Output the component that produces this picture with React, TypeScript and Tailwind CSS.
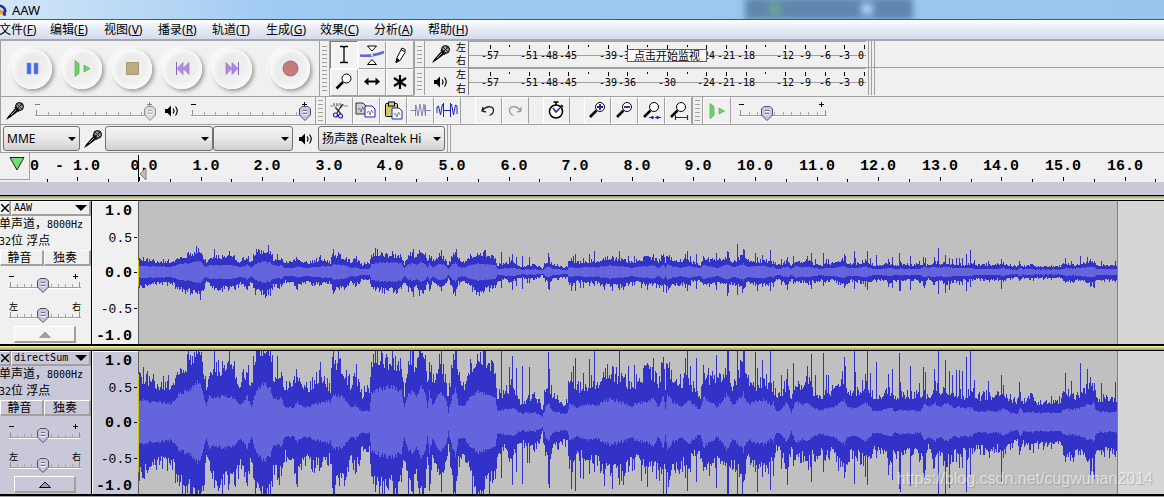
import React from 'react';

const SANS = "font-['Noto_Sans','Noto_Sans_CJK_SC',sans-serif]";
const MONO = "font-['Liberation_Mono','Noto_Sans_CJK_SC',monospace]";
const SMALL_MONO = "font-['DejaVu_Sans_Mono','Noto_Sans_CJK_SC',monospace]";

/* ---------- Waveform data ---------- */

// [x, rms, peak above, peak below]
const ENVELOPE: number[][] = [
  [0, 22, 48, 54], [11, 20, 39, 46], [21, 19, 38, 40], [31, 19, 38, 42], [34, 19, 36, 42], [36, 24, 50, 53],
  [41, 28, 57, 62], [51, 32, 60, 68], [56, 39, 76, 76], [61, 39, 80, 82], [64, 27, 57, 70], [67, 17, 38, 36],
  [71, 27, 54, 50], [76, 24, 53, 60], [89, 25, 56, 58], [95, 23, 50, 56], [101, 17, 38, 44], [108, 25, 55, 62],
  [112, 14, 32, 36], [115, 25, 68, 68], [120, 34, 76, 74], [126, 39, 80, 78], [131, 32, 78, 72], [134, 22, 47, 50],
  [141, 24, 52, 52], [146, 15, 34, 33], [154, 15, 42, 44], [158, 19, 50, 54], [166, 15, 33, 36], [174, 17, 39, 42],
  [184, 20, 46, 42], [191, 20, 34, 36], [194, 27, 64, 66], [204, 25, 54, 58], [211, 14, 36, 35], [216, 17, 48, 48],
  [223, 10, 27, 26], [228, 12, 38, 36], [230, 9, 24, 20], [232, 28, 64, 64], [240, 33, 68, 66], [248, 35, 62, 64],
  [262, 32, 60, 62], [265, 14, 30, 36], [268, 27, 57, 56], [273, 30, 70, 74], [277, 24, 50, 48], [281, 37, 80, 78],
  [286, 30, 72, 66], [288, 15, 37, 38], [290, 30, 62, 58], [293, 17, 40, 37], [301, 30, 64, 62], [306, 24, 44, 44],
  [309, 10, 22, 26], [313, 27, 60, 62], [316, 33, 76, 74], [319, 17, 50, 40], [324, 15, 35, 37], [329, 22, 50, 46],
  [333, 27, 58, 60], [339, 30, 72, 74], [351, 25, 60, 58], [356, 24, 54, 56], [358, 11, 27, 38], [364, 12, 27, 24],
  [371, 14, 36, 34], [376, 12, 30, 30], [380, 9, 20, 20], [391, 9, 23, 25], [396, 9, 26, 24], [401, 7, 18, 17],
  [403, 5, 12, 11], [406, 14, 36, 32], [409, 20, 40, 40], [413, 10, 27, 26], [424, 8, 19, 20], [428, 9, 20, 21],
  [430, 19, 46, 46], [438, 14, 34, 35], [446, 17, 35, 32], [451, 17, 40, 40], [458, 17, 36, 38], [463, 19, 52, 46],
  [471, 23, 49, 50], [484, 19, 43, 50], [491, 15, 34, 42], [498, 19, 40, 36], [508, 20, 52, 50], [514, 24, 49, 42],
  [519, 15, 40, 50], [524, 25, 58, 58], [526, 14, 37, 40], [528, 27, 56, 60], [533, 20, 47, 50], [543, 15, 40, 40],
  [549, 22, 43, 46], [554, 17, 34, 30], [561, 12, 27, 33], [564, 25, 53, 54], [571, 19, 43, 43], [578, 15, 40, 40],
  [588, 28, 58, 50], [593, 17, 37, 43], [599, 22, 46, 50], [604, 28, 60, 56], [609, 17, 40, 36], [618, 22, 37, 46],
  [626, 22, 43, 49], [631, 17, 34, 40], [634, 20, 34, 46], [637, 10, 29, 26], [639, 11, 24, 26], [648, 19, 39, 46],
  [652, 10, 24, 29], [656, 20, 43, 40], [664, 17, 34, 33], [668, 20, 49, 43], [673, 15, 32, 33], [681, 11, 27, 30],
  [688, 14, 29, 33], [694, 14, 33, 28], [698, 17, 40, 40], [705, 22, 46, 50], [709, 14, 31, 33], [716, 13, 27, 30],
  [726, 19, 39, 40], [731, 14, 27, 33], [734, 11, 27, 26], [746, 12, 27, 33], [751, 14, 29, 36], [756, 11, 24, 30],
  [761, 12, 29, 36], [769, 12, 27, 30], [781, 10, 27, 31], [785, 19, 30, 46], [789, 15, 24, 26], [795, 19, 37, 43],
  [799, 15, 30, 33], [806, 19, 34, 40], [814, 15, 30, 33], [824, 14, 25, 30], [831, 14, 30, 31], [838, 10, 25, 26],
  [849, 11, 26, 30], [858, 10, 27, 26], [864, 14, 30, 33], [871, 9, 23, 23], [878, 8, 21, 20], [881, 14, 26, 30],
  [884, 9, 21, 20], [891, 10, 25, 27], [898, 9, 20, 23], [921, 9, 22, 23], [926, 14, 34, 36], [931, 12, 27, 36],
  [941, 14, 24, 30], [948, 17, 34, 40], [954, 18, 36, 43], [958, 10, 24, 30], [978, 10, 24, 30],
];

// [x, peak above, peak below], single columns that stick out of the envelope
const SPIKES: number[][] = [
  [75, 82, 66], [90, 74, 62], [138, 66, 50], [181, 60, 46], [194, 84, 80], [217, 58, 50], [236, 88, 70], [274, 84, 90],
  [302, 80, 70], [362, 72, 56], [370, 55, 40], [373, 66, 63], [377, 54, 50],
  [383, 56, 62], [388, 24, 41], [390, 55, 41], [409, 70, 62], [410, 53, 66], [432, 50, 67], [434, 56, 40],
  [436, 64, 69], [441, 40, 56], [444, 49, 57], [450, 63, 52], [455, 74, 50], [465, 40, 64], [473, 56, 67],
  [480, 74, 63], [484, 44, 63], [489, 56, 50], [495, 57, 48], [502, 40, 59], [508, 59, 65], [514, 64, 44],
  [524, 65, 60], [527, 59, 76], [530, 60, 58], [541, 48, 46], [546, 64, 56], [548, 76, 69], [551, 56, 50],
  [557, 64, 60], [577, 67, 66], [588, 74, 88], [589, 72, 76], [598, 102, 84], [603, 60, 76], [604, 84, 60],
  [605, 78, 58], [616, 70, 50], [618, 54, 70], [623, 62, 55], [631, 78, 68], [642, 47, 47], [648, 53, 63],
  [654, 59, 44], [672, 68, 60], [676, 47, 40], [684, 69, 50], [687, 47, 33], [689, 47, 33], [705, 65, 56],
  [706, 56, 50], [715, 74, 62], [716, 50, 34], [726, 48, 55], [728, 76, 63], [731, 49, 33], [737, 60, 36],
  [749, 48, 53], [753, 53, 58], [760, 69, 67], [761, 40, 70], [771, 56, 64], [780, 39, 40], [784, 55, 51],
  [786, 50, 48], [795, 53, 44], [799, 88, 80], [806, 62, 74], [810, 51, 66], [813, 47, 40], [817, 52, 40],
  [820, 52, 46], [823, 51, 46], [827, 65, 70], [831, 78, 53], [835, 42, 30], [849, 41, 30], [862, 47, 60],
  [864, 37, 36], [880, 40, 33], [891, 29, 28], [926, 49, 40], [932, 41, 33], [941, 59, 33], [948, 53, 40],
  [951, 45, 53], [955, 39, 57], [962, 39, 33], [976, 40, 30],
];

const CLIP_WIDTH = 979;
const MID = 71;

function noise(n: number) {
  const v = Math.sin(n * 127.1 + 11.7) * 43758.5453;
  return v - Math.floor(v);
}

function buildColumns() {
  const columns: number[][] = [];
  let k = 0;
  for (let x = 0; x < CLIP_WIDTH; x++) {
    while (k < ENVELOPE.length - 2 && ENVELOPE[k + 1][0] <= x) k++;
    const a = ENVELOPE[k];
    const b = ENVELOPE[k + 1];
    const t = Math.min(1, (x - a[0]) / (b[0] - a[0]));
    const mix = (i: number) => a[i] + (b[i] - a[i]) * t;
    const swing = (seed: number) => 0.84 + Math.pow(noise(seed), 2) * 0.4;
    columns.push([
      mix(1) * (0.92 + noise(x + 5000) * 0.18),
      mix(2) * swing(x),
      mix(3) * swing(x + 2000),
    ]);
  }
  SPIKES.forEach(([x, up, down]) => {
    columns[x][1] = Math.max(columns[x][1], up);
    columns[x][2] = Math.max(columns[x][2], down);
  });
  return columns;
}

const COLUMNS = buildColumns();

function wavePath(gain: number, up: number, down: number) {
  return COLUMNS.map((c, x) => {
    const top = MID - Math.max(2, Math.round(c[up] * gain));
    const bottom = MID + Math.max(2, Math.round(c[down] * gain));
    return `M${x} ${top}h1V${bottom}h-1z`;
  }).join('');
}

const Waveform = ({ gain }: { gain: number }) => (
  <svg width={CLIP_WIDTH} height="143" shapeRendering="crispEdges" className="block flex-none bg-[#c0c0c0]">
    <path d={wavePath(gain, 1, 2)} fill="#3232c8" />
    <path d={wavePath(gain, 0, 0)} fill="#6464dc" />
    <path d="M978.5 0V143" stroke="#808080" />
  </svg>
);

/* ---------- Small shared parts ---------- */

const Grip = ({ rows = 6 }: { rows?: number }) => (
  <div className="flex w-[11px] flex-none flex-col items-center justify-center gap-[3px] border-x border-l-[#a0a0a0] border-r-[#a0a0a0] bg-[#f0f0f0]">
    {Array.from({ length: rows }, (_, i) => (
      <div key={i} className="h-px w-[5px] bg-[#a0a0a0]" />
    ))}
  </div>
);

type SliderProps = {
  label: string;
  width: number;
  value: number;
  ends?: string[];
  disabled?: boolean;
};

const Slider = ({ label, width, value, ends, disabled }: SliderProps) => {
  const left = 3;
  const span = width - 8;
  const thumb = Math.round(left + (span * value) / 100);
  const ink = disabled ? '#808080' : '#000';
  return (
    <label className="relative block flex-none">
      <svg width={width} height="24" className="block overflow-visible" shapeRendering="crispEdges">
        {ends ? (
          <>
            <text x="0" y="9" fontSize="9" fontFamily="Noto Sans CJK SC">{ends[0]}</text>
            <text x={width - 9} y="9" fontSize="9" fontFamily="Noto Sans CJK SC">{ends[1]}</text>
          </>
        ) : (
          <path d={`M0 5.5h5M${width - 8} 5.5h5M${width - 5.5} 3v5`} stroke={ink} fill="none" />
        )}
        <path d={`M0 16.5H${width}`} stroke="#a0a0a0" />
        <path d={`M0 17.5H${width}`} stroke="#fff" />
        {Array.from({ length: 11 }, (_, i) => {
          const x = Math.round(1 + ((width - 3) * i) / 10) + 0.5;
          const edge = i === 0 || i === 10;
          return <path key={i} d={`M${x} ${edge ? 11 : 13}V16`} stroke={edge ? '#909090' : '#a8a8a8'} />;
        })}
        <path
          d={`M${thumb - 3} 7.5h6l2.500 2.500v6l-5.500 5.500l-5.500 -5.500v-6z`}
          fill={disabled ? '#dcdcdc' : '#c6c6e0'}
          stroke={disabled ? '#909090' : '#50505c'}
          shapeRendering="auto"
        />
        <path d={`M${thumb - 2} 11.5h4M${thumb - 2} 14.5h4`} stroke={disabled ? '#a8a8a8' : '#6c6c8c'} />
        <path d={`M${thumb - 2} 12.5h4M${thumb - 2} 15.5h4`} stroke="#fff" />
      </svg>
      <input
        type="range"
        aria-label={label}
        defaultValue={value}
        disabled={disabled}
        className="absolute inset-0 m-0 size-full opacity-0"
      />
    </label>
  );
};

const MicIcon = () => (
  <svg width="20" height="20" viewBox="0 0 20 20" className="flex-none">
    <path d="M1 19L3 15.500L10 7.500L13 10.500L5 16.500z" fill="#000" />
    <path d="M6 14L11 9" stroke="#aaa" strokeWidth="1" />
    <circle cx="14.500" cy="5.500" r="4" fill="#9a9a9a" stroke="#000" />
    <path d="M12 3l5 5M14.500 2l3.500 3.500M11 5l4 4M17 3l-5 5" stroke="#000" strokeWidth=".7" />
    <path d="M10 6l4 4.500" stroke="#000" strokeWidth="1.500" />
  </svg>
);

const SpeakerIcon = () => (
  <svg width="15" height="14" viewBox="0 0 15 14" fill="none" className="flex-none">
    <path d="M1 5h2.500L7 1.500v11L3.500 9H1z" fill="#000" />
    <path d="M9 4.500q2 2.500 0 5M11.500 2.500q3.500 4.500 0 9" stroke="#000" strokeWidth="1.200" />
  </svg>
);

/* ---------- Title and menu ---------- */

const TitleBar = () => (
  <header className={`relative flex h-5 items-center overflow-hidden border-b border-b-[#4c5868] bg-gradient-to-r from-[#d2e6f8] via-[#9ec9f2] via-25% to-[#9ac4ee] ${SANS}`}>
    <svg width="7" height="14" viewBox="7 0 7 14" className="flex-none">
      <path d="M0 9a6 6 0 0 1 12.500 0" stroke="#1c2ca0" strokeWidth="2.500" fill="none" />
      <path d="M7 6l3 2v4l-3-1z" fill="#f0a020" />
      <rect x="10" y="7" width="3" height="6" rx="1.500" fill="#2838c0" />
    </svg>
    <h1 className="pl-[5px] text-[13px] leading-4 text-black">AAW</h1>
    <div className="absolute top-[-2px] left-[64%] flex h-[22px] w-[168px] items-center gap-20 bg-[#5f87ad] pl-6 blur-[3px]">
      <span className="size-3 bg-[#6ea294]" />
      <span className="size-3 bg-[#a4cdf4]" />
    </div>
  </header>
);

const MENUS = [
  ['文件', 'F'], ['编辑', 'E'], ['视图', 'V'], ['播录', 'R'], ['轨道', 'T'],
  ['生成', 'G'], ['效果', 'C'], ['分析', 'A'], ['帮助', 'H'],
];

const MenuBar = () => (
  <nav className={`flex h-[21px] items-center overflow-hidden border-b-2 border-b-[#a8a8ac] bg-gradient-to-b from-white via-[#e6eaf6] to-[#d6dcee] ${SANS}`}>
    {MENUS.map(([name, key], i) => (
      <button key={key} className={`flex-none text-left text-[12px] leading-4 whitespace-nowrap text-black ${i === 0 ? '-ml-px w-[51px]' : 'w-[54px]'}`}>
        {name}(<u className="underline-offset-1">{key}</u>)
      </button>
    ))}
  </nav>
);

/* ---------- Transport ---------- */

const TRANSPORT = [
  { name: '暂停', icon: <path d="M1 1h4v11H1zM8 1h4v11H8z" fill="#4169f0" stroke="#7c98f4" strokeWidth=".6" /> },
  {
    name: '播放',
    icon: (
      <>
        <path d="M-1 -1.500l4 3v10l-4 3z" fill="#6cd46c" stroke="#58a858" strokeWidth=".7" />
        <path d="M8 3l6 3.500l-6 3.500z" fill="#6cd46c" stroke="#58a858" strokeWidth=".7" />
      </>
    ),
  },
  { name: '停止', icon: <path d="M.5.5h12v12H.5z" fill="#bcac84" stroke="#a89870" /> },
  {
    name: '跳至开头',
    icon: (
      <>
        <path d="M.5 0v13" stroke="#8c64c4" />
        <path d="M7 .5v12L1 6.500zM13 .5v12L7 6.500z" fill="#b48ce4" stroke="#8c64c4" strokeWidth=".6" />
      </>
    ),
  },
  {
    name: '跳至结尾',
    icon: (
      <>
        <path d="M12.500 0v13" stroke="#8c64c4" />
        <path d="M0 .5v12L6 6.500zM6 .5v12L12 6.500z" fill="#b48ce4" stroke="#8c64c4" strokeWidth=".6" />
      </>
    ),
  },
  { name: '录制', icon: <circle cx="6.500" cy="6.500" r="7.500" fill="#c47c7c" stroke="#a86464" /> },
];

const Transport = () => (
  <div className="flex w-[319px] flex-none items-center gap-[10px] border-l border-l-[#a0a0a0] pl-[11px]">
    {TRANSPORT.map(({ name, icon }, i) => (
      <button
        key={name}
        aria-label={name}
        className={`flex size-10 flex-none items-center justify-center rounded-full bg-gradient-to-br from-[#e6e6e6] to-[#f4f4f4] shadow-[inset_3px_3px_4px_#fafafa,inset_-2px_-2px_4px_#fafafa,2px_2px_4px_#989898,-2px_-2px_4px_#fff] ${i === 5 ? 'ml-2' : ''}`}
      >
        <svg width="13" height="13" className="overflow-visible">{icon}</svg>
      </button>
    ))}
  </div>
);

/* ---------- Tools ---------- */

const TOOLS = [
  { name: '选择', icon: <path d="M6 2.500h3l1 1l1-1h3M10 3v15M6 18.500h3l1-1l1 1h3" stroke="#000" fill="none" strokeWidth="1.300" /> },
  {
    name: '包络',
    icon: (
      <>
        <path d="M5.500 2h9L10 7zM5.500 20.500h9L10 15.500z" fill="#fff" stroke="#000" />
        <path d="M-2 11.500C6 12.500 14 11 22 8" stroke="#6464dc" strokeWidth="2.500" fill="none" />
        <circle cx="10" cy="11" r="1" fill="#fff" />
      </>
    ),
  },
  {
    name: '绘制',
    icon: (
      <>
        <path d="M6 18.500l1-5L12 4l3 1.500v3l-5 8z" fill="#fff" stroke="#000" />
        <path d="M11 5.500l3.500 2M6 18.500l1.500-4l1.500 1.500z" stroke="#000" fill="#000" />
      </>
    ),
  },
  {
    name: '缩放',
    icon: (
      <>
        <circle cx="12.500" cy="7.500" r="4.500" fill="#fff" stroke="#000" />
        <path d="M9 11l-6.500 6.500" stroke="#000" strokeWidth="2.500" />
      </>
    ),
  },
  { name: '时间移动', icon: <path d="M2 10.500l4.500-4v3h7v-3l4.500 4l-4.500 4v-3h-7v3z" fill="#000" /> },
  { name: '多功能', icon: <path d="M10 4v14M4 7l12 8M16 7L4 15" stroke="#000" strokeWidth="2.200" /> },
];

const Tools = () => (
  <div className="grid w-[84px] flex-none grid-cols-3 grid-rows-2">
    {TOOLS.map(({ name, icon }, i) => (
      <button
        key={name}
        aria-label={name}
        className={`flex items-center justify-center border ${i === 0 ? 'border-t-[#808080] border-l-[#808080] border-r-white border-b-white bg-[#f4f4f4]' : 'border-t-white border-l-white border-r-[#a0a0a0] border-b-[#a0a0a0]'}`}
      >
        <svg width="20" height="22" viewBox="0 0 20 22" className="overflow-visible">{icon}</svg>
      </button>
    ))}
  </div>
);

/* ---------- Meters ---------- */

const MARKS = [-57, -54, -51, -48, -45, -42, -39, -36, -33, -30, -27, -24, -21, -18, -15, -12, -9, -6, -3, 0];
const BLANK = [-54, -42, -33, -27, -15];

const Meter = ({ recording }: { recording?: boolean }) => (
  <div className="flex h-[27px] flex-none border-b border-b-[#a0a0a0] last:border-b-0">
    <Grip rows={5} />
    <div className="flex w-[31px] flex-none items-center justify-center">
      {recording ? <MicIcon /> : <SpeakerIcon />}
    </div>
    <div className={`flex w-[10px] flex-none flex-col justify-between text-[10px] leading-[13px] text-black ${SANS}`}>
      <span>左</span>
      <span>右</span>
    </div>
    <div className="relative ml-[2px] border-l border-t border-l-[#808080] border-t-[#a0a0a0]">
      <svg width="397" height="25" className="block" shapeRendering="crispEdges">
        <path d="M0 13.500H397" stroke="#a0a0a0" />
        {MARKS.map((db) => {
          const x = Math.round(395 + db * 6.57);
          return (
            <g key={db}>
              <path d={`M${x + 0.5} 3v${BLANK.includes(db) ? 2 : 4}`} stroke="#000" />
              {!BLANK.includes(db) && !(recording && db === -30) && (
                <text x={x} y="17" fontSize="10" textAnchor={db === 0 ? 'end' : 'middle'} fontFamily="DejaVu Sans Mono">{db}</text>
              )}
            </g>
          );
        })}
      </svg>
      {recording && (
        <button className={`absolute top-[7px] left-[158px] h-[13px] w-20 border border-[#606060] bg-white text-center text-[11px] leading-[11px] whitespace-nowrap text-black ${SANS}`}>
          点击开始监视
        </button>
      )}
    </div>
    <div className="ml-[2px] w-[4px] flex-none border-x border-[#a0a0a0]" />
    <div className="w-[3px] flex-none border-r border-[#a0a0a0]" />
  </div>
);

/* ---------- Edit toolbar ---------- */

const sheet = (x: number, y: number, fill: string, stroke: string) => (
  <>
    <path d={`M${x} ${y}h7l3 3v8h-10z`} fill={fill} stroke={stroke} />
    <path d={`M${x + 2} ${y + 7}l1.500-2l1.500 4l1.500-5l1.500 3`} stroke="#666" strokeWidth=".8" fill="none" />
  </>
);

const lens = (
  <>
    <circle cx="12" cy="6" r="4.500" fill="#fff" stroke="#000" />
    <path d="M8.500 9.500L2 16" stroke="#000" strokeWidth="2.500" />
  </>
);

const EDIT_GROUPS = [
  [
    {
      name: '剪切',
      icon: (
        <>
          <path d="M0 5h3l1-3l1.500 6l1.500-6l1 3l2-3l1.500 5l1.500-4l1 2h4" stroke="#777" strokeWidth=".8" fill="none" />
          <path d="M12.500 3L7 12M6 7l5 6" stroke="#222" strokeWidth="1.200" />
          <circle cx="5.500" cy="14" r="2" fill="none" stroke="#2020b0" strokeWidth="1.200" />
          <circle cx="10.500" cy="15" r="2" fill="none" stroke="#2020b0" strokeWidth="1.200" />
        </>
      ),
    },
    { name: '复制', icon: <>{sheet(-1, 2, '#d0d0d0', '#333')}{sheet(8, 5, '#fff', '#2020c0')}</> },
    {
      name: '粘贴',
      icon: (
        <>
          <rect x="1.500" y="2.500" width="12" height="13" rx="1" fill="#d4cc60" stroke="#000" />
          <rect x="4.500" y="1" width="6" height="4" fill="#ccc" stroke="#000" />
          {sheet(8, 7, '#fff', '#2020c0')}
        </>
      ),
    },
    {
      name: '修剪',
      icon: (
        <path
          d="M-.5 9.500h5M15 9.500h5M4.500 4v11M5 4l2 11l2-12l2 12l2-12l1.500 12M14.500 4v11"
          stroke="#7878b4"
          strokeWidth=".9"
          fill="none"
        />
      ),
    },
    {
      name: '静音',
      icon: (
        <path
          d="M-1 12V6l1.500-1l2 9l2-11M5.500 2v14M5.500 9.500h7M12.500 2v14M13.500 3l2 11l2-10l1.500 1v8"
          stroke="#2020c0"
          strokeWidth="1"
          fill="none"
        />
      ),
    },
  ],
  [
    { name: '撤销', icon: <path d="M4 6l-1 4l4 1M3.500 10C6 5 14 4 14.500 9q0 4-4 5.500" stroke="#222" strokeWidth="1.300" fill="none" /> },
    { name: '重做', icon: <path d="M15 6l0 4l-4 1M14.500 10C12 5 4 4 3.500 9q0 4 4 5.500" stroke="#999" strokeWidth="1.300" fill="none" /> },
  ],
  [
    {
      name: '计时',
      icon: (
        <>
          <circle cx="9" cy="10.500" r="6.500" fill="#fff" stroke="#000" strokeWidth="1.500" />
          <path d="M9 4V1M6.500 1h5M14 4l2 2" stroke="#000" strokeWidth="1.500" />
          <path d="M6 7l3 4l4-4" stroke="#2020b0" strokeWidth="1.500" fill="none" />
        </>
      ),
    },
  ],
  [
    { name: '放大', icon: <>{lens}<path d="M9 6h6M12 3v6" stroke="#2020b0" strokeWidth="1.800" /></> },
    { name: '缩小', icon: <>{lens}<path d="M9 6h6" stroke="#2020b0" strokeWidth="1.800" /></> },
    { name: '适应选区', icon: <>{lens}<path d="M7 16.500h5M13 16.500h6M10 15l2 1.500l-2 1.500zM16 15l-2 1.500l2 1.500z" stroke="#2020b0" fill="#2020b0" /></> },
    { name: '适应项目', icon: <>{lens}<path d="M6.500 14v5M18.500 14v5M7 16.500h11" stroke="#2020b0" strokeWidth="1.200" /></> },
  ],
];

const EditToolbar = () => (
  <div className="flex h-7 border-b border-b-[#a0a0a0]">
    <div className="flex w-[315px] flex-none items-center border-l border-l-[#a0a0a0] pl-1">
      <MicIcon />
      <div className="ml-[10px]"><Slider label="录音音量" width={120} value={100} disabled /></div>
      <div className="mr-3 ml-[9px]"><SpeakerIcon /></div>
      <Slider label="播放音量" width={119} value={100} />
    </div>
    <Grip />
    {EDIT_GROUPS.map((group, g) => (
      <div key={g} className={`flex flex-none ${g ? 'ml-[14px]' : ''}`}>
        {group.map(({ name, icon }) => (
          <button key={name} aria-label={name} className="flex w-[27px] items-center justify-center border border-t-white border-r-[#a0a0a0] border-b-white border-l-white">
            <svg width="19" height="19" viewBox="0 0 19 19" className="overflow-visible">{icon}</svg>
          </button>
        ))}
      </div>
    ))}
    <Grip />
    <button aria-label="变速播放" className="flex w-7 flex-none items-center justify-center border border-t-white border-r-[#a0a0a0] border-b-white border-l-white">
      <svg width="16" height="16" viewBox="0 0 16 16">
        <path d="M1 .5l4 3v9l-4 3z" fill="#6cd46c" stroke="#58a858" strokeWidth=".7" />
        <path d="M10 5l5.500 3L10 11z" fill="#6cd46c" stroke="#58a858" strokeWidth=".7" />
      </svg>
    </button>
    <div className="ml-2 flex items-center"><Slider label="播放速度" width={88} value={31} /></div>
  </div>
);

/* ---------- Device toolbar ---------- */

const DeviceSelect = ({ label, value, className }: { label: string; value: string; className: string }) => (
  <label className={`relative block flex-none ${className}`}>
    <select
      aria-label={label}
      className={`block h-[25px] w-full appearance-none rounded-[3px] border border-[#707070] bg-gradient-to-b from-[#f4f4f4] via-[#e8e8e8] to-[#d0d0d0] pl-[3px] text-[12px] leading-4 text-black ${SANS}`}
    >
      <option>{value}</option>
    </select>
    <svg width="8" height="4" className="pointer-events-none absolute top-[11px] right-1">
      <path d="M0 0h8L4 4z" />
    </svg>
  </label>
);

const DeviceToolbar = () => (
  <div className="flex h-7 items-center border-b border-b-[#a0a0a0]">
    <div className="flex h-full w-[448px] flex-none items-center border-x border-[#a0a0a0] pl-[2px]">
      <DeviceSelect label="音频主机" value="MME" className="w-[77px]" />
      <div className="mr-[2px] ml-[3px]"><MicIcon /></div>
      <DeviceSelect label="录音设备" value="" className="w-[108px]" />
      <DeviceSelect label="录音声道" value="" className="w-20" />
      <div className="mx-[5px]"><SpeakerIcon /></div>
      <DeviceSelect label="播放设备" value="扬声器 (Realtek Hi" className="w-[127px]" />
    </div>
    <div className="h-full w-[3px] border-r border-[#a0a0a0]" />
  </div>
);

/* ---------- Timeline ---------- */

const Timeline = () => (
  <div className="flex h-[29px] bg-[#f0f0f0]">
    <button aria-label="固定播放头" className="flex h-[27px] w-[30px] flex-none items-start justify-center border-r border-b border-[#a0a0a0] pt-1">
      <svg width="16" height="14" className="ml-1">
        <path d="M1 .5h14L8 13z" fill="#74dc74" stroke="#222" />
      </svg>
    </button>
    <div className="min-w-0 flex-1 overflow-hidden">
      <svg width="100%" height="29" className="block">
        {Array.from({ length: 38 }, (_, i) => {
          const half = i - 3;
          const x = Math.round(109 + half * 30.8);
          return <path key={i} d={`M${x + 0.5} ${half % 2 ? 26 : 24}v4`} stroke="#000" />;
        })}
        <text x="0" y="17" fontSize="15" fontWeight="bold" fontFamily="Liberation Mono">0</text>
        <text x="25" y="17" fontSize="15" fontWeight="bold" fontFamily="Liberation Mono">- 1.0</text>
        {Array.from({ length: 17 }, (_, s) => (
          <text
            key={s}
            x={Math.round((s < 10 ? 114 : 109) + s * 61.6)}
            y="17"
            fontSize="15"
            fontWeight="bold"
            textAnchor="middle"
            fontFamily="Liberation Mono"
          >
            {s.toFixed(1)}
          </text>
        ))}
        <path d="M108.500 2v27" stroke="#000" />
        <path d="M110 21l6-6v12z" fill="#c0c0c0" stroke="#808080" />
      </svg>
    </div>
  </div>
);

/* ---------- Tracks ---------- */

const AXIS = [
  { label: '1.0', y: 13, strong: true },
  { label: '0.5', y: 40, tick: true },
  { label: '0.0', y: 75, strong: true, tick: true },
  { label: '-0.5', y: 111, tick: true },
  { label: '-1.0', y: 138, strong: true },
];

const BEVEL = 'border-r-2 border-b-2 border-r-[#a0a0a0] border-b-[#a0a0a0] border-t border-l border-t-white border-l-white';

type TrackProps = { name: string; gain: number; selected?: boolean; marker: string };

const Track = ({ name, gain, selected, marker }: TrackProps) => (
  <section className={`flex h-[143px] overflow-hidden ${selected ? 'bg-[#c8c8d8]' : 'bg-[#f0f0f0]'}`}>
    <div className="flex w-[92px] flex-none flex-col border-r border-r-black text-black">
      <div className="flex h-[15px]">
        <button aria-label="关闭轨道" className={`-ml-px flex w-3 items-center justify-center ${BEVEL}`}>
          <svg width="8" height="8" className="flex-none"><path d="M0 0l8 8M8 0l-8 8" stroke="#000" strokeWidth="1.500" /></svg>
        </button>
        <button className={`flex min-w-0 flex-1 items-center justify-between pl-[2px] text-[10px] leading-3 ${SMALL_MONO} ${BEVEL}`}>
          {name}
          <svg width="12" height="6" className="mr-[2px] flex-none"><path d="M0 0h12L6 6z" /></svg>
        </button>
      </div>
      <div className={`-ml-px h-[34px] text-[12px] leading-4 whitespace-nowrap ${SANS}`}>
        <p>单声道，<span className={`text-[10px] ${SMALL_MONO}`}>8000Hz</span></p>
        <p><span className={`text-[10px] ${SMALL_MONO}`}>32</span>位 浮点</p>
      </div>
      <div className={`flex h-4 text-[12px] leading-[13px] ${SANS}`}>
        <button className={`w-[44px] pr-1 ${BEVEL}`}>静音</button>
        <button className={`flex-1 pr-1 ${BEVEL}`}>独奏</button>
      </div>
      <div className="mt-[5px] flex flex-1 flex-col gap-[6px] pl-[9px]">
        <Slider label={`${name} 增益`} width={72} value={48} />
        <Slider label={`${name} 声像`} width={72} value={48} ends={['左', '右']} />
      </div>
      <button aria-label="折叠" className={`mb-px ml-[14px] flex h-[17px] w-[62px] flex-none items-center justify-center ${selected ? '' : 'bg-[#f4f4f4]'} ${BEVEL}`}>
        <svg width="12" height="7">
          <path d="M.5 6.500h11L6 1z" fill="#a0a0a0" stroke={selected ? '#000' : '#a0a0a0'} />
        </svg>
      </button>
    </div>
    <svg width="46" height="143" className={`block flex-none border-t border-l border-white ${MONO}`}>
      {AXIS.map(({ label, y, strong, tick }) => (
        <g key={label}>
          <text x="39" y={y} textAnchor="end" fontSize={strong ? 15 : 13} fontWeight={strong ? 'bold' : 'normal'}>{label}</text>
          {tick && <path d={`M41 ${y - 4.5}h3`} stroke="#000" />}
        </g>
      ))}
    </svg>
    <div className="flex w-px flex-none items-center bg-[#606060]">
      <div className={`w-px bg-[#c8c800] ${marker}`} />
    </div>
    <Waveform gain={gain} />
    <div className="flex-1 bg-[#d6d6d6]" />
  </section>
);

export default function App() {
  return (
    <main className="relative h-screen overflow-hidden bg-[#f0f0f0]">
      <TitleBar />
      <MenuBar />
      <div className="flex h-14 border-b border-b-[#a0a0a0]">
        <Transport />
        <Grip rows={12} />
        <Tools />
        <div className="flex min-w-0 flex-1 flex-col">
          <Meter recording />
          <Meter />
        </div>
      </div>
      <EditToolbar />
      <DeviceToolbar />
      <Timeline />
      <div className="h-[13px] bg-[#c8c8d8]" />
      <div className="h-[6px] border-y border-black bg-gradient-to-b from-[#909090] to-[#ffff80]" />
      <Track name="AAW" gain={1 / 3.6} marker="h-[26px]" />
      <div className="h-[7px] border-t-2 border-b border-black bg-gradient-to-b from-[#ffff80] to-[#909090]" />
      <Track name="directSum" gain={1} selected marker="h-[98px]" />
      <div className="h-[7px] border-t-2 border-black bg-[#a0a0a0]" />
      <p className="absolute right-[11px] bottom-2 font-['Liberation_Sans',sans-serif] text-[16px] leading-5 text-white/60 [text-shadow:1px_1px_1px_#8888]">
        https://blog.csdn.net/cugwuhan2014
      </p>
    </main>
  );
}
